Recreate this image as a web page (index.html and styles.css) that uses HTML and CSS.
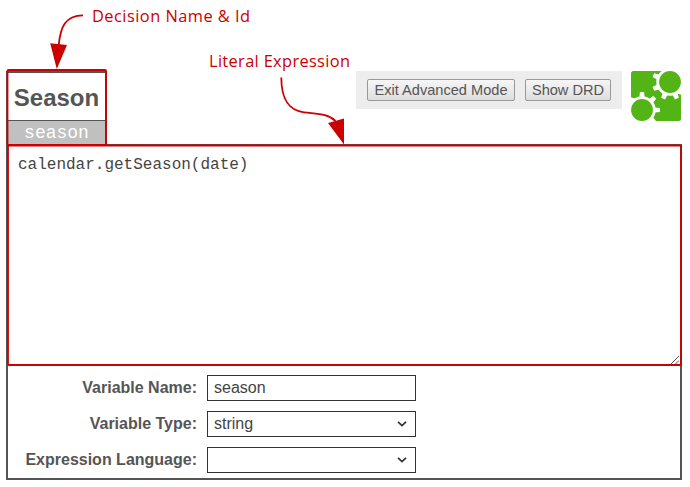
FILE: index.html
```html
<!DOCTYPE html>
<html lang="en">
<head>
<meta charset="utf-8">
<title>Decision</title>
<link rel="stylesheet" href="styles.css">
</head>
<body>
<main class="editor">
  <header class="top">
    <div class="tab">
      <h1 class="name">Season</h1>
      <div class="id">season</div>
    </div>
    <div class="toolbar">
      <button class="btn exit">Exit Advanced Mode</button>
      <button class="btn drd">Show DRD</button>
    </div>
    <svg class="logo" viewBox="0 0 50 50">
      <rect width="50" height="50" rx="2.5" fill="#52b415"/>
      <path d="M39 -1H51V24L39 20zM-1 26L11 30V51H-1z" fill="#fff"/>
      <g fill="#fff" transform="translate(39 11)">
        <circle r="13.700"/>
        <path d="M-2.600 -13L-2.100 -18H2.100L2.600 -13z" transform="rotate(157.500)"/>
        <path d="M-2.600 -13L-2.100 -18H2.100L2.600 -13z" transform="rotate(202.500)"/>
        <path d="M-2.600 -13L-2.100 -18H2.100L2.600 -13z" transform="rotate(247.500)"/>
        <path d="M-2.600 -13L-2.100 -18H2.100L2.600 -13z" transform="rotate(292.500)"/>
      </g>
      <g fill="#fff" transform="translate(11 39)">
        <circle r="13.700"/>
        <path d="M-2.600 -13L-2.100 -18H2.100L2.600 -13z"/>
        <path d="M-2.600 -13L-2.100 -18H2.100L2.600 -13z" transform="rotate(45)"/>
        <path d="M-2.600 -13L-2.100 -18H2.100L2.600 -13z" transform="rotate(90)"/>
        <path d="M-2.600 -13L-2.100 -18H2.100L2.600 -13z" transform="rotate(135)"/>
      </g>
      <circle cx="39" cy="11" r="10.900" fill="#52b415"/>
      <circle cx="11" cy="39" r="10.900" fill="#52b415"/>
    </svg>
  </header>
  <section class="panel">
    <div class="expression">calendar.getSeason(date)
      <svg class="grip" viewBox="0 0 8 8"><path d="M0 8L8 0M4.500 8L8 4.500"/></svg>
    </div>
    <div class="fields">
      <label>Variable Name:</label><div class="field">season</div>
      <label>Variable Type:</label><div class="field">string<svg class="chevron" viewBox="0 0 10 6"><path d="M1 .8L5 4.600L9 .8"/></svg></div>
      <label>Expression Language:</label><div class="field"><svg class="chevron" viewBox="0 0 10 6"><path d="M1 .8L5 4.600L9 .8"/></svg></div>
    </div>
  </section>
</main>
<svg class="notes" width="690" height="487" viewBox="0 0 690 487">
  <g class="line">
    <rect x="8" y="145.500" width="673" height="219.500" rx="1"/>
    <rect x="7.500" y="70" width="98.500" height="75" rx="1"/>
    <path d="M83 15.300C65 15.500 60.500 27 58.700 45M281.300 77.500C281.300 97 287 110 304 112.300C317 114 328 113.500 335.500 121"/>
  </g>
  <path class="head" d="M50.200 43.300L67 45L56.800 69zM328 123L344 118.500V144.500z"/>
  <text x="92" y="22" textLength="158">Decision Name &amp; Id</text>
  <text x="209" y="67" textLength="141">Literal Expression</text>
</svg>
</body>
</html>
```
FILE: styles.css
```css
* { box-sizing: border-box; }
body { margin: 0; width: 690px; height: 487px; overflow: hidden; position: relative; background: #fff; color: #555; font-family: "Liberation Sans", Arial, sans-serif; }
.editor { padding: 71px 8px 0 6px; }
.top { display: flex; align-items: flex-start; height: 73px; }
.tab { width: 101px; height: 74px; border: 2px solid #555; border-bottom: 0; }
.name { margin: 0; height: 48px; border-bottom: 1px solid #555; font-size: 24px; line-height: 50px; text-align: center; }
.id { height: 24px; background: #c0c0c0; color: #fff; font: 18px/24px "Liberation Mono", monospace; text-align: center; }
.toolbar { display: flex; gap: 10px; margin-left: auto; width: 266px; height: 38px; padding: 8px 11px; background: #ededed; }
.btn { height: 22px; padding: 0; border: 1px solid #999; border-radius: 2px; background: linear-gradient(#f6f6f6, #dedede); color: #555; font: 14.6px/20px "Liberation Sans", Arial, sans-serif; white-space: nowrap; }
.exit { width: 148px; }
.drd { width: 86px; }
.logo { width: 50px; height: 50px; margin: 0 1px 0 9px; }
.panel { height: 336px; border: 2px solid #555; }
.expression { position: relative; height: 219px; padding: 9px 10px; color: #444; font: 16px/20px "Liberation Mono", monospace; }
.grip { position: absolute; right: 1px; bottom: 1px; width: 8px; height: 8px; fill: none; stroke: #555; stroke-width: 1; }
.fields { display: grid; grid-template-columns: 189px 209px; column-gap: 10px; row-gap: 10px; padding-top: 10px; font-size: 16px; line-height: 26px; }
.fields label { text-align: right; font-weight: bold; }
.field { display: flex; align-items: center; justify-content: space-between; height: 26px; padding: 0 8px 0 6px; border: 1px solid #333; color: #444; line-height: 22px; }
.chevron { width: 10px; height: 6px; margin-left: auto; fill: none; stroke: #333; stroke-width: 1.8; }
.notes { position: absolute; left: 0; top: 0; }
.line { fill: none; stroke: #c00; stroke-width: 1.8; }
.head { fill: #c00; }
.notes text { fill: #c00; font: 16.4px "Open Sans", "Noto Sans", sans-serif; }
```
